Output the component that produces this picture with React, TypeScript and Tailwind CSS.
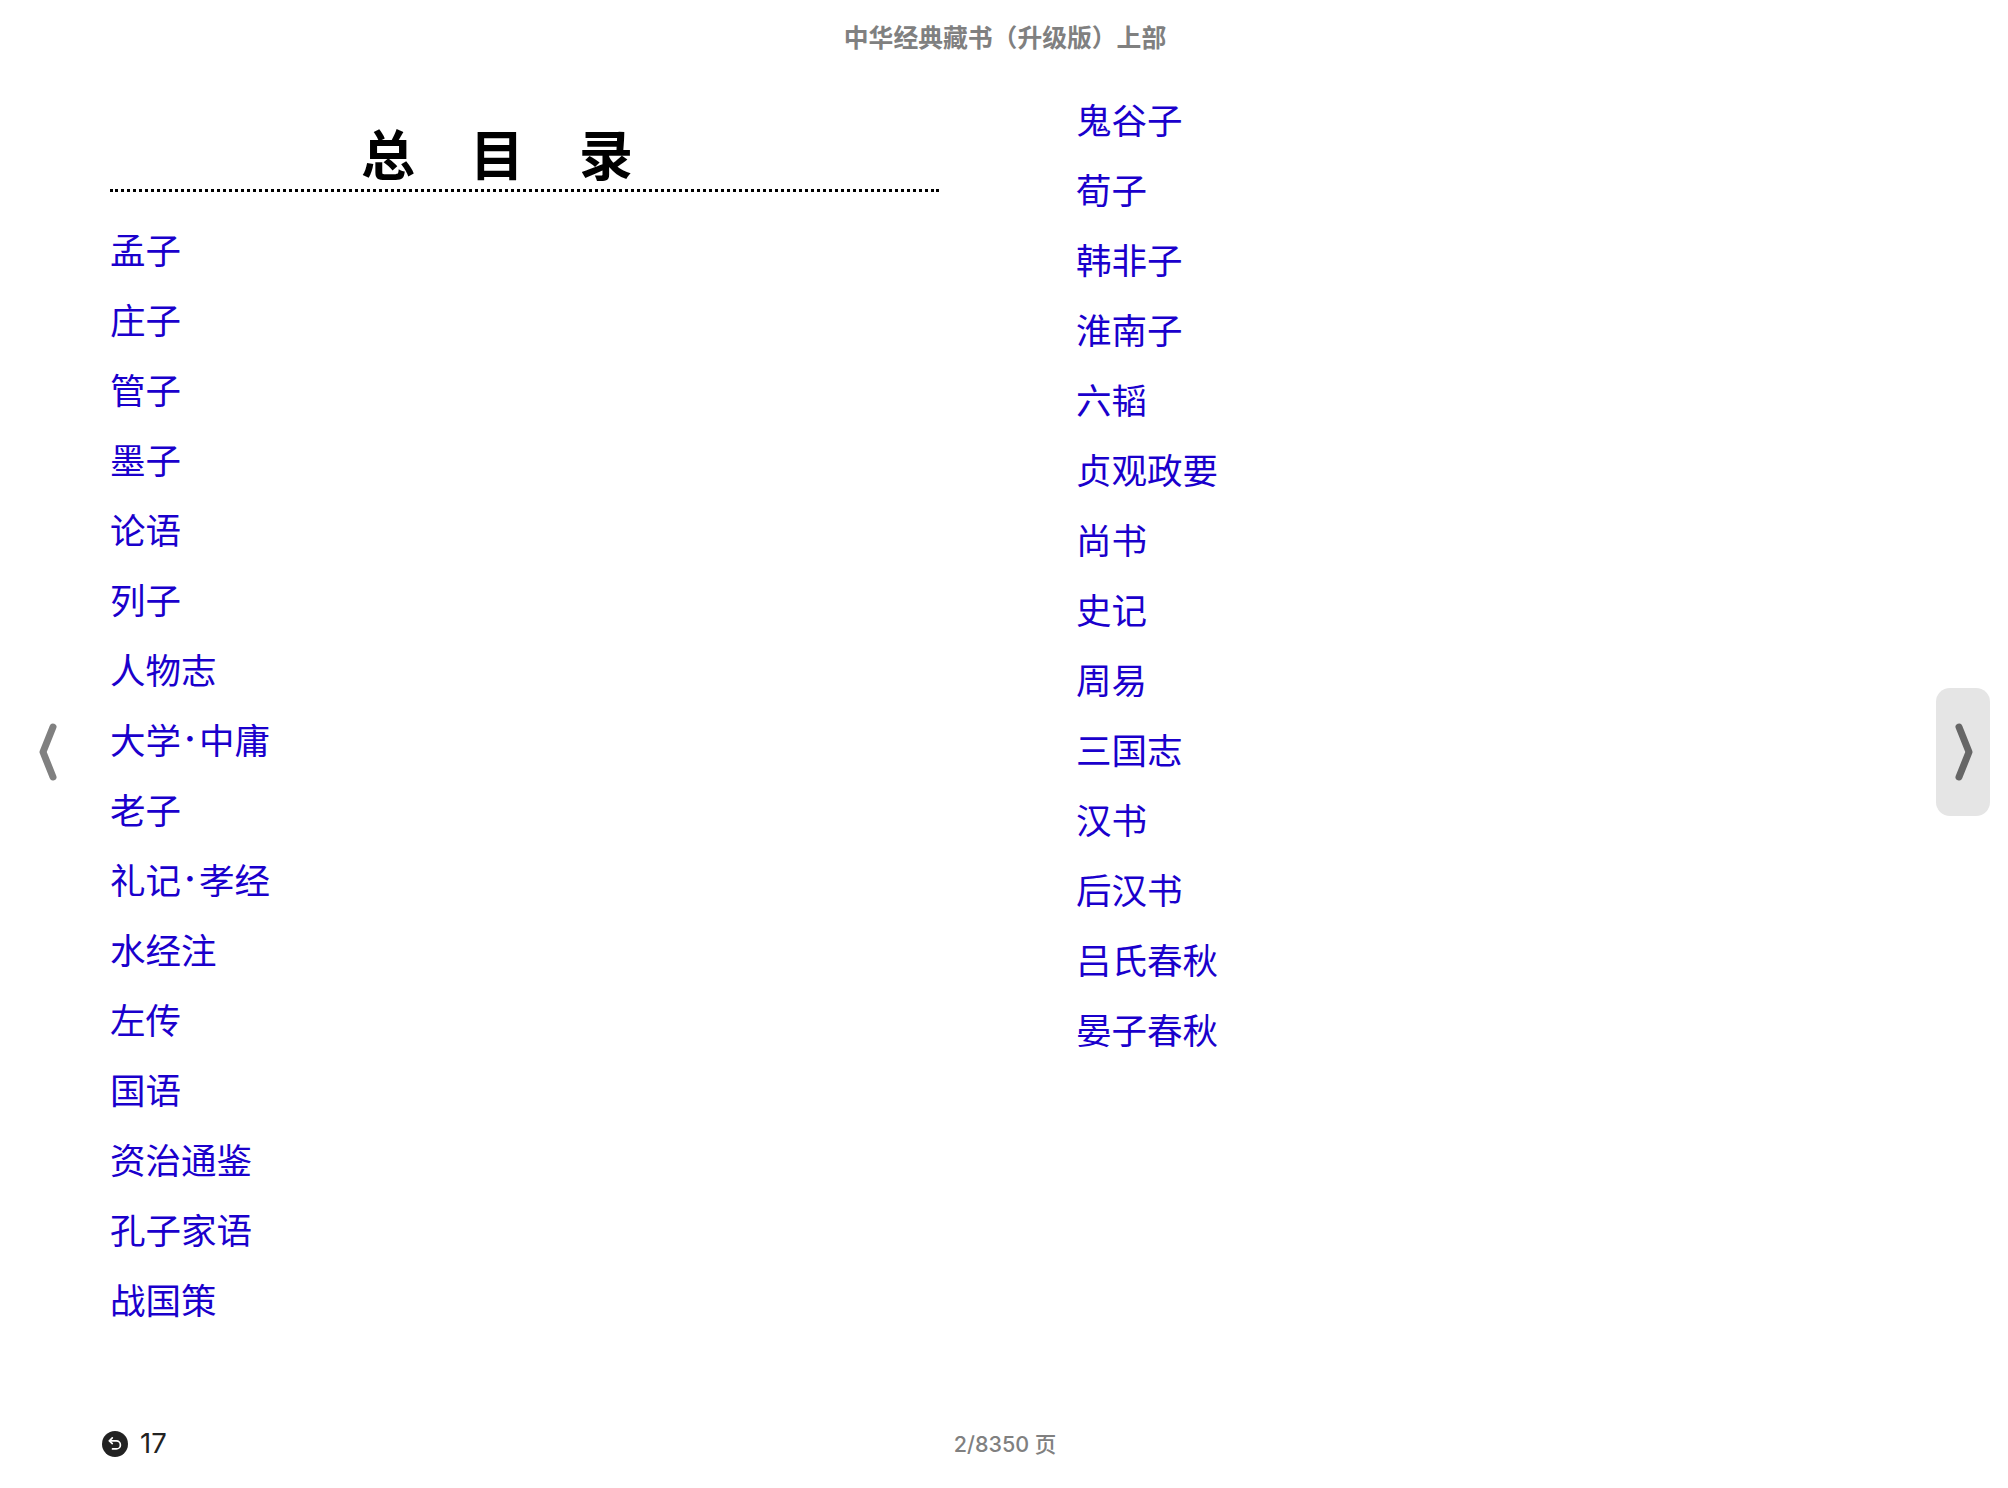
const LEFT_BOOKS = [
  "孟子", "庄子", "管子", "墨子", "论语", "列子", "人物志", "大学·中庸",
  "老子", "礼记·孝经", "水经注", "左传", "国语", "资治通鉴", "孔子家语", "战国策",
];

const RIGHT_BOOKS = [
  "鬼谷子", "荀子", "韩非子", "淮南子", "六韬", "贞观政要", "尚书", "史记",
  "周易", "三国志", "汉书", "后汉书", "吕氏春秋", "晏子春秋",
];

function BookList({ books }: { books: string[] }) {
  return (
    <div className="flex flex-col">
      {books.map((b) => {
        const [first, second] = b.split("·");
        return (
          <div key={b} className="h-[70px] flex items-center text-[35.5px] text-[#1a00cc]">
            {first}
            {second && <span className="w-[18px] text-center font-semibold font-['Inter',sans-serif]">·</span>}
            {second}
          </div>
        );
      })}
    </div>
  );
}

export default function App() {
  return (
    <div className="relative w-[2008px] h-[1488px] flex flex-col bg-white font-['Noto_Sans_CJK_SC','Liberation_Sans',sans-serif]">
      {/* Header */}
      <div className="h-[84px] pb-[11px] pl-[2px] flex items-center justify-center text-[24.8px] font-bold text-[#808080]">
        中华经典藏书（升级版）上部
      </div>

      {/* Pages */}
      <div className="flex-1 flex">
        <div className="w-[967px] pl-[110px]">
          <div className="w-[829px] h-[108px] mb-[22px] flex items-end justify-center border-b-[3px] border-dotted border-black">
            <h1 className="text-[54px] leading-[73px] font-bold tracking-[55px] text-black">总目录</h1>
          </div>
          <BookList books={LEFT_BOOKS} />
        </div>
        <div className="flex-1 pl-[109px]">
          <BookList books={RIGHT_BOOKS} />
        </div>
      </div>

      {/* Footer */}
      <div className="relative h-[88px] pl-[102px] flex items-center">
        <div className="w-[26px] h-[26px] rounded-full bg-[#222222] flex items-center justify-center">
          <svg width="18" height="18" viewBox="0 0 16 16" fill="none" stroke="white" strokeWidth="1.5" strokeLinecap="round" strokeLinejoin="round">
            <path d="M5.6 2.6 L3 5.2 L5.6 7.6" />
            <path d="M3.2 5.2 H9.2 A3.6 3.6 0 0 1 9.2 12.4 H5.8" />
          </svg>
        </div>
        <span className="ml-[12px] text-[27.5px] text-[#222222] font-['Inter',sans-serif]">17</span>
        <span className="absolute inset-0 pl-[2px] flex items-center justify-center text-[21.5px] font-medium text-[#808080] font-['Inter','Noto_Sans_CJK_SC',sans-serif]">
          2/8350 页
        </span>
      </div>

      {/* Page arrows */}
      <svg className="absolute left-[38px] top-[722px]" width="22" height="60" viewBox="0 0 22 60" fill="none" stroke="#808080" strokeWidth="7" strokeLinecap="round" strokeLinejoin="round">
        <path d="M15 5 L5 30 L15 55" />
      </svg>
      <div className="absolute left-[1936px] top-[688px] w-[54px] h-[128px] rounded-[14px] bg-[#e5e5e5] flex items-center justify-center">
        <svg width="22" height="60" viewBox="0 0 22 60" fill="none" stroke="#666666" strokeWidth="7" strokeLinecap="round" strokeLinejoin="round">
          <path d="M7 5 L17 30 L7 55" />
        </svg>
      </div>
    </div>
  );
}
